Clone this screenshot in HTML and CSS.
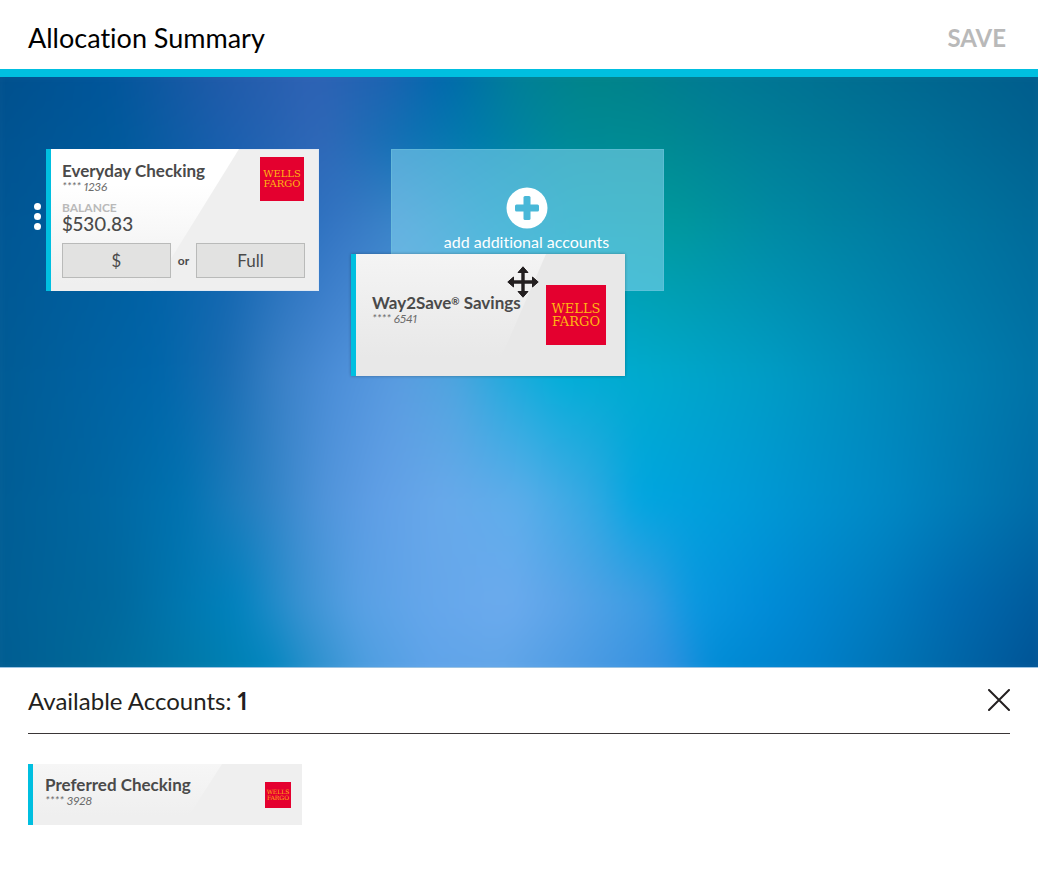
FILE: index.html
```html
<!DOCTYPE html>
<html lang="en">
<head>
<meta charset="utf-8">
<title>Allocation Summary</title>
<link rel="stylesheet" href="styles.css">
</head>
<body>
<div class="page">
  <header class="header">
    <h1 class="title">Allocation Summary</h1>
    <button class="save" type="button">SAVE</button>
  </header>

  <main class="stage">
    <div class="backdrop" aria-hidden="true">
      <div class="bands">
        <i class="band band-7"></i>
        <i class="band band-6"></i>
        <i class="band band-5"></i>
        <i class="band band-4"></i>
        <i class="band band-3"></i>
        <i class="band band-2"></i>
        <i class="band band-1"></i>
      </div>
    </div>

    <div class="board">
      <div class="slot">
        <button class="handle" type="button" aria-label="Account options"><i></i><i></i><i></i></button>
        <article class="card card-main">
          <div class="card-top">
            <div>
              <h2 class="name">Everyday Checking</h2>
              <p class="number">**** 1236</p>
            </div>
            <div class="logo logo-medium">WELLS<br>FARGO</div>
          </div>
          <p class="label">BALANCE</p>
          <p class="balance">$530.83</p>
          <div class="choices">
            <button class="choice" type="button">$</button>
            <span class="or">or</span>
            <button class="choice" type="button">Full</button>
          </div>
        </article>
      </div>
      <button class="dropzone" type="button">
        <svg class="plus" viewBox="0 0 42 42" aria-hidden="true">
          <circle cx="21" cy="21" r="20.500" fill="#fff"/>
          <rect x="17.500" y="9" width="7" height="24" rx="1.500" fill="#49b8d8"/>
          <rect x="9" y="17.500" width="24" height="7" rx="1.500" fill="#49b8d8"/>
        </svg>
        <span>add additional accounts</span>
      </button>
    </div>

    <article class="card card-drag">
      <div>
        <h2 class="name">Way2Save<span class="mark">®</span> Savings</h2>
        <p class="number">**** 6541</p>
      </div>
      <div class="logo logo-large">WELLS<br>FARGO</div>
      <svg class="move" viewBox="0 0 32 32" aria-hidden="true">
        <path fill="none" stroke="#231f20" stroke-width="3.400" d="M16 4v24M4 16h24"/>
        <path fill="#231f20" stroke="#231f20" stroke-linejoin="round" d="M16 .8l5 5.700H11zM16 31.200l5-5.700H11zM.8 16l5.700-5v10zM31.200 16l-5.700-5v10z"/>
      </svg>
    </article>
  </main>

  <section class="drawer">
    <div class="drawer-head">
      <h2 class="drawer-title">Available Accounts: <b>1</b></h2>
      <button class="close" type="button" aria-label="Close">
        <svg viewBox="0 0 22 22" aria-hidden="true"><path d="M1 1l20 20M21 1L1 21" stroke="#231f20" stroke-width="2" stroke-linecap="round"/></svg>
      </button>
    </div>
    <article class="card card-small">
      <div>
        <h3 class="name">Preferred Checking</h3>
        <p class="number">**** 3928</p>
      </div>
      <div class="logo logo-small">WELLS<br>FARGO</div>
    </article>
  </section>
</div>
</body>
</html>
```

FILE: styles.css
```css
* { box-sizing: border-box; }

body {
  margin: 0;
  background: #fff;
  color: #231f20;
  font-family: Lato, "Open Sans", sans-serif;
  font-variant-ligatures: none;
  font-variant-numeric: proportional-nums;
}

h1, h2, h3, p { margin: 0; }

button {
  font: inherit;
  border: 0;
  padding: 0;
  background: none;
  cursor: pointer;
}

.page {
  display: flex;
  flex-direction: column;
  min-height: 100vh;
}

/* Header */
.header {
  display: flex;
  align-items: center;
  justify-content: space-between;
  padding: 22px 32px 15px 28px;
  border-bottom: 8px solid #00bfe0;
}

.title {
  font-size: 27px;
  line-height: 32px;
  font-weight: 400;
  color: #000;
}

.save {
  font-size: 24px;
  line-height: 32px;
  font-weight: 700;
  color: #b9b9b9;
}

/* Stage */
.stage {
  position: relative;
  flex: 1;
  border-bottom: 1px solid #9cc4e4;
}

.backdrop {
  position: absolute;
  inset: 0;
  overflow: hidden;
}

.bands {
  position: absolute;
  inset: -24px;
  filter: blur(12px);
}

.band {
  position: absolute;
  inset: 0;
}

.band-1 {
  background: linear-gradient(to right, #004f8a, #00559a 12%, #1f5aa8 22%, #2e62b4 31%, #1c62b0 38%, #0068ac 43%, #007f96 50%, #008488 57%, #007894 69%, #006c90 82%, #005a8c);
  mask-image: linear-gradient(#000 3%, transparent 14%);
}
.band-2 {
  background: linear-gradient(to right, #00528f, #005a9c 13%, #1b5fae 23%, #3068b8 32%, #0f72b4 40%, #007cac 46%, #008a98 54%, #008b92 62%, #008098 72%, #006f98 87%, #00608f);
  mask-image: linear-gradient(#000 14%, transparent 26%);
}
.band-3 {
  background: linear-gradient(to right, #005592, #005ea0 14%, #1064b0 23%, #3474c2 33%, #3a84c8 39%, #1090bc 47%, #0098a8 56%, #00989c 64%, #008aa2 73%, #0078a0 87%, #006898);
  mask-image: linear-gradient(#000 26%, transparent 50%);
}
.band-4 {
  background: linear-gradient(to right, #005a92, #0066aa 17%, #1a6cb2 23%, #3a80c6 28%, #4c8ed8 33%, #5a9ce0 39%, #4ea4de 44%, #20aadc 49%, #00aed8 54%, #00aacc 62%, #009cc4 73%, #0084b4 87%, #0070a4);
  mask-image: linear-gradient(#000 50%, transparent 70%);
}
.band-5 {
  background: linear-gradient(to right, #005b92, #0067a2 12%, #0072b0 19%, #2a80c2 26%, #5094da 32%, #609fe6 37%, #68a9ea 43%, #5cadea 50%, #2fa8e2 57%, #00a6e0 61%, #009cd8 70%, #0088c4 84%, #0076b0 93%, #0068a4);
  mask-image: linear-gradient(#000 70%, transparent 86%);
}
.band-6 {
  background: linear-gradient(to right, #005c92, #00699e 13%, #0082be 24%, #3a92d2 30%, #58a0e4 35%, #64a6ea 41%, #6cabee 49%, #5ca4e8 54%, #3a9ce2 62%, #0a98e0 66%, #008cd8 73%, #007cc0 83%, #006ab0 90%, #005898);
  mask-image: linear-gradient(#000 86%, transparent 97%);
}
.band-7 {
  background: linear-gradient(to right, #005a90, #006898 10%, #0072a2 16%, #007eae 22%, #0086be 27%, #2a90cc 31%, #4e9ee0 36%, #60a4ea 42%, #62a6e8 48%, #4698e2 58%, #3090e0 64%, #008cd6 68%, #0080ca 77%, #0070b0 86%, #005a9c 95%, #004f90);
}

.board {
  position: relative;
  display: flex;
  align-items: stretch;
  gap: 72px;
  padding: 72px 34px;
}

.slot {
  display: flex;
  gap: 5px;
}

.handle {
  display: flex;
  flex-direction: column;
  align-items: center;
  align-self: center;
  gap: 3px;
  width: 7px;
  padding-bottom: 8px;
}

.handle i {
  width: 7px;
  height: 7px;
  border-radius: 50%;
  background: #fff;
}

/* Account cards */
.card {
  position: relative;
  z-index: 0;
  border-left: 5px solid #00bfe0;
  background: #efefef;
}

.card::before {
  content: "";
  position: absolute;
  inset: 0;
  z-index: -1;
}

.name {
  font-size: 17px;
  line-height: 20px;
  font-weight: 700;
  color: #4a4a4a;
}

.mark {
  font-size: 10px;
  line-height: 10px;
  vertical-align: 4px;
}

.number {
  font-size: 12px;
  line-height: 12px;
  font-style: italic;
  color: #6b6b6b;
}

.card-main {
  width: 273px;
  padding: 8px 14px 13px 11px;
  box-shadow: inset 0 0 0 1px #e2e9f2;
}

.card-main::before {
  background: linear-gradient(#fff 25%, #efefef 95%);
  clip-path: polygon(0 0, 188px 0, 100px 100%, 0 100%);
}

.card-top {
  display: flex;
  justify-content: space-between;
  height: 44px;
  padding-right: 1px;
}

.card-top .name { padding-top: 4px; }

.label {
  font-size: 12px;
  line-height: 13px;
  font-weight: 700;
  color: #b9b9b9;
}

.balance {
  font-size: 19px;
  line-height: 20px;
  font-weight: 500;
  color: #4a4a4a;
}

.choices {
  display: flex;
  align-items: center;
  gap: 7px;
  padding-top: 9px;
}

.choice {
  flex: 1;
  height: 35px;
  border: 1px solid #b9bab9;
  background: #e2e2e1;
  font-size: 17px;
  color: #4a4a4a;
}

.or {
  font-size: 12px;
  color: #4a4a4a;
  font-weight: 700;
}

.dropzone {
  display: flex;
  flex-direction: column;
  align-items: center;
  width: 273px;
  padding: 38px 2px 0 0;
  background: rgba(135, 215, 242, 0.55);
  box-shadow: inset 0 0 0 1px rgba(110, 195, 220, 0.5);
  color: #fff;
  font-size: 16px;
  line-height: 20px;
}

.plus {
  width: 42px;
  height: 42px;
  margin-bottom: 3px;
}

/* Card being dragged over the board */
.card-drag {
  position: absolute;
  left: 351px;
  top: 177px;
  z-index: 2;
  display: flex;
  justify-content: space-between;
  align-items: center;
  width: 274px;
  height: 122px;
  padding: 0 19px 0 16px;
  background: #e8e8e8;
  box-shadow: 0 0 3px rgba(0, 0, 0, 0.3);
}

.card-drag .name { margin-top: -12px; }

.card-drag::before {
  background: linear-gradient(#f4f4f4, #e8e8e8 85%);
  clip-path: polygon(0 0, 190px 0, 137px 100%, 0 100%);
}

.move {
  position: absolute;
  left: 151px;
  top: 12px;
  width: 32px;
  height: 32px;
}

/* Bank logo */
.logo {
  display: grid;
  place-content: center;
  flex: none;
  background: #e4002f;
  color: #ffb612;
  font-family: "DejaVu Serif", serif;
  text-align: center;
}

.logo-medium { width: 44px; height: 44px; font-size: 10px; line-height: 10px; }
.logo-large { width: 60px; height: 60px; font-size: 13px; line-height: 13px; }
.logo-small { width: 26px; height: 26px; font-size: 6px; line-height: 6px; }

/* Drawer */
.drawer {
  padding: 16px 28px 54px;
}

.drawer-head {
  display: flex;
  justify-content: space-between;
  align-items: flex-start;
  padding-bottom: 15px;
  margin-bottom: 30px;
  border-bottom: 1px solid #3a3637;
}

.drawer-title {
  font-size: 24px;
  line-height: 34px;
  font-weight: 400;
}

.close {
  width: 22px;
  height: 22px;
  margin-top: 5px;
}

.close svg { display: block; }

.card-small {
  display: flex;
  justify-content: space-between;
  align-items: center;
  width: 274px;
  height: 61px;
  padding: 0 11px 0 12px;
}

.card-small .name { margin-top: -8px; }

.card-small::before {
  background: linear-gradient(#f6f6f6, #efefef 85%);
  clip-path: polygon(0 0, 189px 0, 150px 100%, 0 100%);
}
```
